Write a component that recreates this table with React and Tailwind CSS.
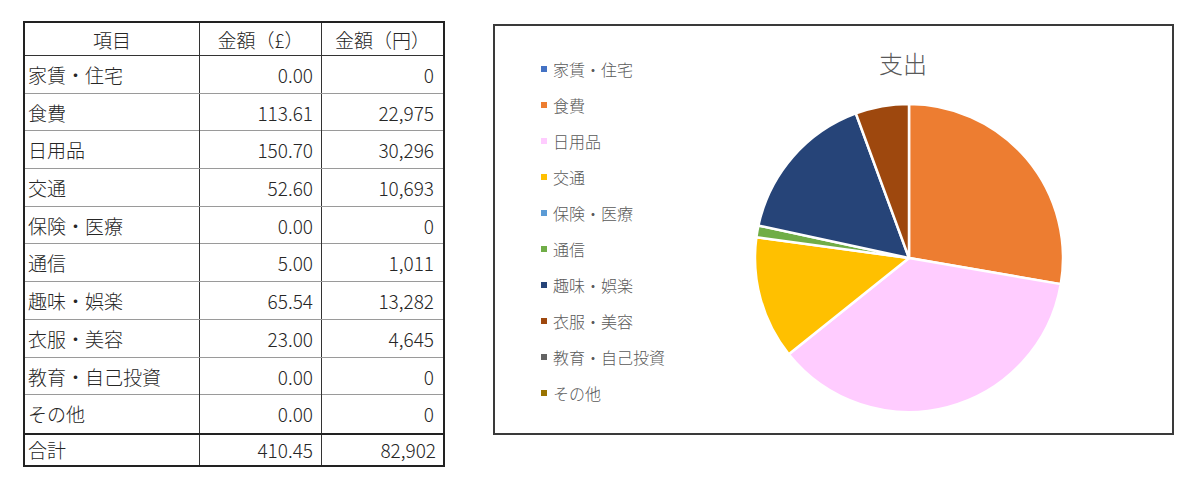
import React from "react";

const rows = [
  { name: "家賃・住宅", gbp: "0.00", jpy: 0, color: "#4472C4" },
  { name: "食費", gbp: "113.61", jpy: 22975, color: "#ED7D31" },
  { name: "日用品", gbp: "150.70", jpy: 30296, color: "#FFCCFF" },
  { name: "交通", gbp: "52.60", jpy: 10693, color: "#FFC000" },
  { name: "保険・医療", gbp: "0.00", jpy: 0, color: "#5B9BD5" },
  { name: "通信", gbp: "5.00", jpy: 1011, color: "#70AD47" },
  { name: "趣味・娯楽", gbp: "65.54", jpy: 13282, color: "#264478" },
  { name: "衣服・美容", gbp: "23.00", jpy: 4645, color: "#9E480E" },
  { name: "教育・自己投資", gbp: "0.00", jpy: 0, color: "#636363" },
  { name: "その他", gbp: "0.00", jpy: 0, color: "#997300" },
];

const font = { fontFamily: '"Noto Sans CJK JP", "Noto Sans", sans-serif' };

const fmt = (n) => n.toLocaleString("en-US");

const Pie = () => {
  const total = rows.reduce((s, r) => s + r.jpy, 0);
  const cx = 160;
  const cy = 160;
  const r = 154;
  let start = 0;
  const pt = (a) => [cx + r * Math.sin(a), cy - r * Math.cos(a)];

  return (
    <svg width="320" height="320" viewBox="0 0 320 320">
      {rows
        .filter((row) => row.jpy > 0)
        .map((row) => {
          const sweep = (row.jpy / total) * Math.PI * 2;
          const [x1, y1] = pt(start);
          const [x2, y2] = pt(start + sweep);
          const large = sweep > Math.PI ? 1 : 0;
          start += sweep;
          return (
            <path
              key={row.name}
              d={`M${cx},${cy} L${x1},${y1} A${r},${r} 0 ${large} 1 ${x2},${y2} Z`}
              fill={row.color}
              stroke="#fff"
              strokeWidth="2.5"
              strokeLinejoin="round"
            />
          );
        })}
    </svg>
  );
};

export default function App() {
  return (
    <div className="w-[1200px] h-[484px] bg-white flex items-start text-[#262626] font-light" style={font}>
      {/* table */}
      <div className="ml-[23px] mt-[21px] w-[422px] border-2 border-[#222] flex flex-col">
        <div className="grid grid-cols-[175px_122px_121px] h-[33px] border-b border-[#333] text-[19px] leading-[33px]">
          <div className="text-center border-r border-[#333]">項目</div>
          <div className="text-center border-r border-[#333]">金額（£）</div>
          <div className="text-center">金額（円）</div>
        </div>
        {rows.map((row, i) => (
          <div
            key={row.name}
            className={
              "grid grid-cols-[175px_122px_121px] h-[37.7px] text-[19px] leading-[37px] " +
              (i < rows.length - 1 ? "border-b border-[#9a9a9a]" : "")
            }
          >
            <div className="pl-[3px] border-r border-[#333] whitespace-nowrap">{row.name}</div>
            <div className="pr-[8px] text-right border-r border-[#333]">{row.gbp}</div>
            <div className="pr-[9px] text-right">{fmt(row.jpy)}</div>
          </div>
        ))}
        <div className="grid grid-cols-[175px_122px_121px] h-[32px] border-t-2 border-[#222] text-[19px] leading-[30px]">
          <div className="pl-[3px] border-r border-[#333]">合計</div>
          <div className="pr-[8px] text-right border-r border-[#333]">410.45</div>
          <div className="pr-[7px] text-right">82,902</div>
        </div>
      </div>

      {/* chart */}
      <div className="ml-[48px] mt-[24px] w-[681px] h-[411px] border-2 border-[#3a3a3a] flex">
        <div className="w-[254px] pl-[46px] pt-[33px] flex flex-col gap-[16px]">
          {rows.map((row) => (
            <div key={row.name} className="flex items-center h-[20px] gap-[6px] text-[16px] text-[#595959]">
              <span className="w-[6px] h-[6px] shrink-0" style={{ backgroundColor: row.color }} />
              <span className="whitespace-nowrap">{row.name}</span>
            </div>
          ))}
        </div>
        <div className="w-[320px] flex flex-col items-center">
          <div className="mt-[20px] h-[34px] leading-[34px] pr-[12px] text-[24px] text-[#595959]">支出</div>
          <div className="mt-[18px]">
            <Pie />
          </div>
        </div>
      </div>
    </div>
  );
}
